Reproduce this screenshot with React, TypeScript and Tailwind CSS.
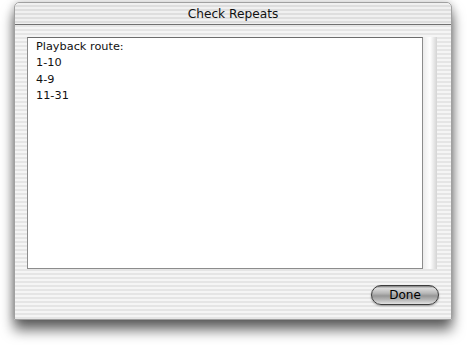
export default function App() {
  const lines = ["Playback route:", "1-10", "4-9", "11-31"];

  return (
    <div className="w-[467px] h-[345px] bg-white overflow-hidden pt-[2px] pl-[14px]">
      {/* window */}
      <div className="w-[438px] h-[318px] flex flex-col rounded-t-[5px] border border-[#a0a0a0] bg-[repeating-linear-gradient(to_bottom,#f5f5f5_0px,#f5f5f5_2px,#e5e5e5_2px,#e5e5e5_4px)] shadow-[0_10px_13px_rgba(0,0,0,0.6),0_0_8px_rgba(0,0,0,0.22)]">
        <div className="h-[22px] shrink-0 flex items-center justify-center border-b border-[#707070] rounded-t-[5px] bg-[repeating-linear-gradient(to_bottom,#f0f0f0_0px,#f0f0f0_2px,#dedede_2px,#dedede_4px)]">
          <span className="text-[12.2px] text-[#111] font-['DejaVu_Sans',sans-serif] leading-none pt-[1px]">
            Check Repeats
          </span>
        </div>

        <div className="flex pl-[12px] pt-[12px]">
          <div className="w-[396px] h-[232px] bg-white border border-[#8c8c8c] border-t-[#6c6c6c] pl-[8px] pt-[1px]">
            {lines.map((l) => (
              <div key={l} className="text-[11.3px] leading-[16.3px] text-[#111] font-['DejaVu_Sans',sans-serif]">
                {l}
              </div>
            ))}
          </div>
          <div className="w-[14px] h-[232px] bg-gradient-to-r from-[#ececec] via-white to-[#d4d4d4]" />
        </div>

        <div className="flex justify-end pr-[12px] mt-[16px]">
          <button className="w-[68px] h-[20px] rounded-full border border-[#3c3c3c] bg-[linear-gradient(to_bottom,#7a7a7a_0%,#dcdcdc_12%,#b8b8b8_40%,#969696_55%,#b4b4b4_75%,#e2e2e2_100%)] shadow-[0_1px_2px_rgba(0,0,0,0.35)] flex items-center justify-center">
            <span className="text-[12px] leading-none text-black font-['DejaVu_Sans',sans-serif]">Done</span>
          </button>
        </div>
      </div>
    </div>
  );
}
